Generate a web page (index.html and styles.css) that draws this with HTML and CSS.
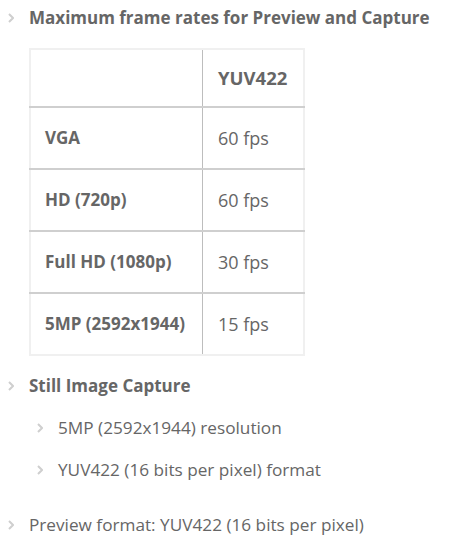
FILE: index.html
```html
<!DOCTYPE html>
<html>
<head>
<meta charset="utf-8">
<link rel="stylesheet" href="styles.css">
</head>
<body>
<ul class="list">
  <li class="item">
    <svg class="chev" viewBox="0 0 6 10" width="6" height="10"><path d="M1 1 L5 5 L1 9" fill="none" stroke="#cfcfcf" stroke-width="2"/></svg>
    <div class="content">
      <div class="title">Maximum frame rates for Preview and Capture</div>
      <table class="rates">
        <tr class="head"><td class="c1"></td><td class="c2 hcell">YUV422</td></tr>
        <tr><td class="c1 bold">VGA</td><td class="c2">60 fps</td></tr>
        <tr><td class="c1 bold">HD (720p)</td><td class="c2">60 fps</td></tr>
        <tr><td class="c1 bold">Full HD (1080p)</td><td class="c2">30 fps</td></tr>
        <tr class="last"><td class="c1 bold">5MP (2592x1944)</td><td class="c2">15 fps</td></tr>
      </table>
    </div>
  </li>
  <li class="item">
    <svg class="chev" viewBox="0 0 6 10" width="6" height="10"><path d="M1 1 L5 5 L1 9" fill="none" stroke="#cfcfcf" stroke-width="2"/></svg>
    <div class="content">
      <div class="title">Still Image Capture</div>
      <ul class="sub">
        <li class="subitem"><svg class="chev" viewBox="0 0 6 10" width="6" height="10"><path d="M1 1 L5 5 L1 9" fill="none" stroke="#cfcfcf" stroke-width="2"/></svg><span>5MP (2592x1944) resolution</span></li>
        <li class="subitem"><svg class="chev" viewBox="0 0 6 10" width="6" height="10"><path d="M1 1 L5 5 L1 9" fill="none" stroke="#cfcfcf" stroke-width="2"/></svg><span>YUV422 (16 bits per pixel) format</span></li>
      </ul>
    </div>
  </li>
  <li class="item">
    <svg class="chev" viewBox="0 0 6 10" width="6" height="10"><path d="M1 1 L5 5 L1 9" fill="none" stroke="#cfcfcf" stroke-width="2"/></svg>
    <div class="content"><span class="text">Preview format: YUV422 (16 bits per pixel)</span></div>
  </li>
</ul>
</body>
</html>
```
FILE: styles.css
```css
html, body { margin: 0; padding: 0; background: #fff; }
body {
  font-family: "Open Sans", "DejaVu Sans", sans-serif;
  color: #666;
  font-size: 17.2px;
  line-height: 24px;
}
.list { list-style: none; margin: 0; padding: 6px 0 0 0; }
.item { display: flex; align-items: flex-start; margin-bottom: 18px; }
.chev { flex: none; margin-top: 7px; }
.item > .chev { margin-left: 8px; margin-right: 15px; }
.content { flex: 1; }
.title { font-weight: 700; font-size: 17px; }
.rates {
  margin-top: 18px;
  border-collapse: collapse;
  border: 2px solid #f0f0f0;
  font-size: 18px;
}
.rates td { padding: 0 16px; height: 60px; }
.rates .c1 { width: 141px; padding-left: 14px; border-right: 1px solid #bdbdbd; }
.rates .bold { font-size: 17px; }
.rates .hcell { font-weight: 700; font-size: 18.5px; }
.rates .c2 { width: 68px; padding-left: 15px; }
.rates tr { border-bottom: 2px solid #cfcfcf; }
.rates tr.head td { height: 56px; }
.rates tr.last { border-bottom: none; }
.bold { font-weight: 700; }
.sub { list-style: none; margin: 18px 0 0 0; padding: 0; }
.subitem { display: flex; align-items: flex-start; margin-bottom: 18px; }
.subitem:last-child { margin-bottom: 13px; }
.subitem .chev { margin-left: 8px; margin-right: 15px; }
.text { display: block; }
```
